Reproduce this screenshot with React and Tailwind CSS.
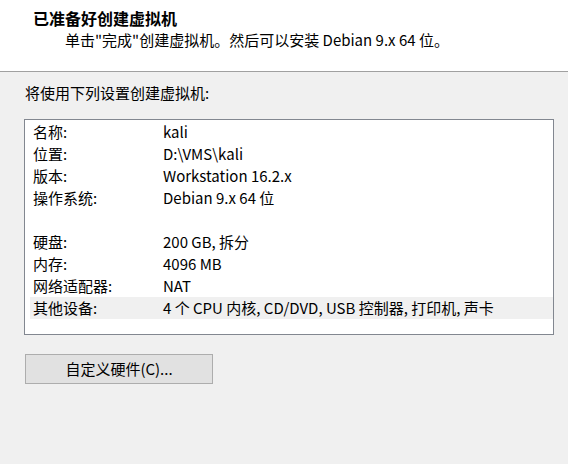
export default function App() {
  const rows = [
    ["名称:", "kali"],
    ["位置:", "D:\\VMS\\kali"],
    ["版本:", "Workstation 16.2.x"],
    ["操作系统:", "Debian 9.x 64 位"],
    ["", ""],
    ["硬盘:", "200 GB, 拆分"],
    ["内存:", "4096 MB"],
    ["网络适配器:", "NAT"],
    ["其他设备:", "4 个 CPU 内核, CD/DVD, USB 控制器, 打印机, 声卡"],
  ];

  return (
    <div className="flex h-[464px] w-[568px] flex-col bg-[#f0f0f0] font-['Noto_Sans_CJK_SC',sans-serif] text-[15px] text-black">
      {/* header */}
      <div className="h-[72px] border-b border-[#a0a0a0] bg-white pt-[7px]">
        <div className="pl-[33px] text-[16px] font-bold leading-[22px]">已准备好创建虚拟机</div>
        <div className="pl-[65px] leading-[22px]">
          单击"完成"创建虚拟机。然后可以安装 Debian 9.x 64 位。
        </div>
      </div>

      <div className="mt-[10px] pl-[25px] leading-[22px]">将使用下列设置创建虚拟机:</div>

      {/* summary list */}
      <div className="mt-[15px] ml-[24px] h-[216px] w-[530px] border border-[#828790] bg-white pt-[1px] pl-[5px]">
        {rows.map(([label, value], i) => (
          <div
            key={i}
            className={`flex h-[22px] leading-[22px] ${i === rows.length - 1 ? "bg-[#f0f0f0]" : ""}`}
          >
            <div className="w-[133px] shrink-0 pl-[3px]">{label}</div>
            <div className="whitespace-nowrap">{value}</div>
          </div>
        ))}
      </div>

      {/* customize hardware */}
      <button className="mt-[19px] ml-[25px] flex h-[30px] w-[188px] items-center justify-center border border-[#adadad] bg-[#e1e1e1]">
        自定义硬件(C)...
      </button>
    </div>
  );
}
